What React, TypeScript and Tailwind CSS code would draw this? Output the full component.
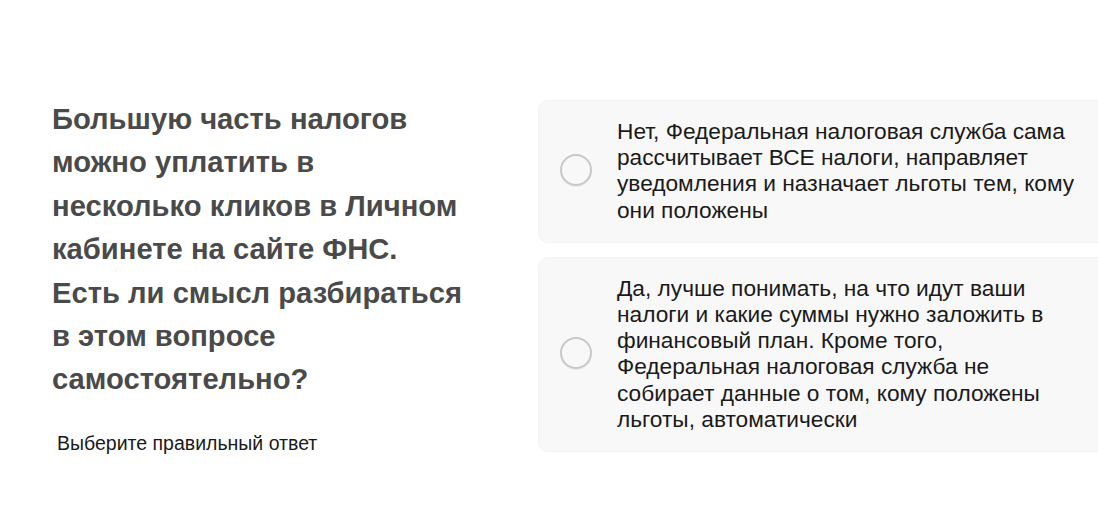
const ANSWERS = [
  "Нет, Федеральная налоговая служба сама рассчитывает ВСЕ налоги, направляет уведомления и назначает льготы тем, кому они положены",
  "Да, лучше понимать, на что идут ваши налоги и какие суммы нужно заложить в финансовый план. Кроме того, Федеральная налоговая служба не собирает данные о том, кому положены льготы, автоматически",
];

export default function App() {
  return (
    <div className="w-[1098px] h-[523px] overflow-hidden bg-white flex font-['Liberation_Sans',Arial,sans-serif]">
      {/* вопрос */}
      <div className="pl-[52px] pt-[98px] w-[538px] shrink-0">
        <h2 className="w-[414px] text-[29.2px] leading-[43.4px] font-bold text-[#4a4a4a]">
          Большую часть налогов можно уплатить в несколько кликов в Личном кабинете на сайте ФНС. Есть ли смысл разбираться в этом вопросе самостоятельно?
        </h2>
        <p className="mt-[30px] ml-[5px] text-[19.5px] leading-[22px] text-[#1a1a1a]">
          Выберите правильный ответ
        </p>
      </div>

      {/* варианты */}
      <div className="pt-[100px] flex flex-col gap-[14px] shrink-0">
        {ANSWERS.map((a) => (
          <label
            key={a}
            className="w-[600px] flex items-center rounded-[10px] border border-[#f3f3f3] bg-[#f8f8f8] pt-[17px] pb-[19px] pl-[21px] cursor-pointer"
          >
            <span className="w-[32px] h-[32px] rounded-full border-2 border-[#c8c8c8] shadow-[0_1px_1px_rgba(0,0,0,0.06)] shrink-0" />
            <span className="ml-[25px] w-[466px] text-[22.7px] leading-[26.2px] text-[#1a1a1a]">
              {a}
            </span>
          </label>
        ))}
      </div>
    </div>
  );
}
